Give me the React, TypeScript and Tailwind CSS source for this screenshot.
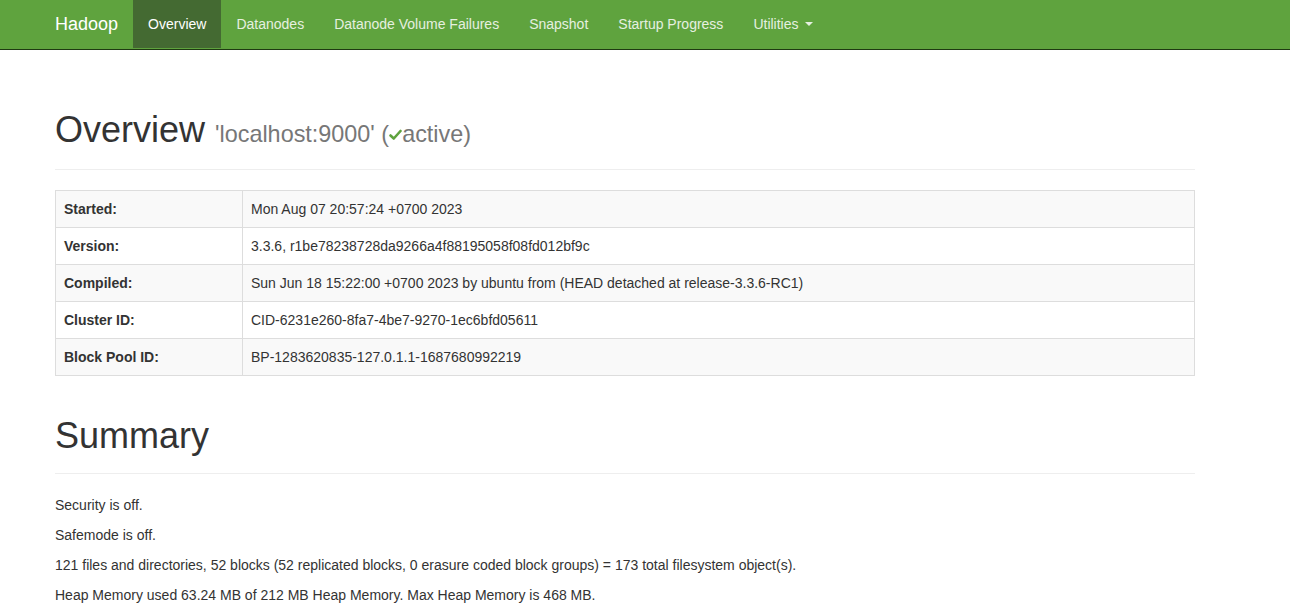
import React from "react";

const navItems = ["Datanodes", "Datanode Volume Failures", "Snapshot", "Startup Progress"];

const rows: [string, string][] = [
  ["Started:", "Mon Aug 07 20:57:24 +0700 2023"],
  ["Version:", "3.3.6, r1be78238728da9266a4f88195058f08fd012bf9c"],
  ["Compiled:", "Sun Jun 18 15:22:00 +0700 2023 by ubuntu from (HEAD detached at release-3.3.6-RC1)"],
  ["Cluster ID:", "CID-6231e260-8fa7-4be7-9270-1ec6bfd05611"],
  ["Block Pool ID:", "BP-1283620835-127.0.1.1-1687680992219"],
];

export default function App() {
  return (
    <div className="min-h-[609px] bg-white text-[14px] leading-[20px] text-[#333]" style={{ fontFamily: '"Liberation Sans", Arial, Helvetica, sans-serif' }}>
      <nav className="h-[50px] bg-[#5fa33e] border-b border-[#1f3a12]">
        <div className="ml-[40px] flex h-[49px] items-stretch pb-[1px]">
          <span className="flex items-center px-[15px] text-[18px] text-white">Hadoop</span>
          <span className="flex items-center px-[15px] bg-[#446a32] text-white">Overview</span>
          {navItems.map((n) => (
            <span key={n} className="flex items-center px-[15px] text-[#e6f0e0]">{n}</span>
          ))}
          <span className="flex items-center px-[15px] text-[#e6f0e0]">
            Utilities
            <span className="ml-[6px] inline-block h-0 w-0 border-x-[4px] border-t-[4px] border-x-transparent border-t-[#e6f0e0]" />
          </span>
        </div>
      </nav>

      <div className="ml-[55px] w-[1140px]">
        <div className="mt-[60px] mb-[20px] border-b border-[#eee] pb-[15px]">
          <h1 className="text-[36px] leading-[40px] text-[#333]" style={{ fontWeight: 400 }}>
            Overview{" "}
            <span className="text-[23.4px] text-[#777]">
              'localhost:9000' (
              <svg className="inline-block mb-[2px]" width="13" height="11" viewBox="0 0 13 11">
                <path d="M1.5 6.5 L4.8 9.5 L11.5 2" stroke="#5fa33e" strokeWidth="2.6" fill="none" strokeLinecap="round" strokeLinejoin="round" />
              </svg>
              active)
            </span>
          </h1>
        </div>

        <table className="w-full border-collapse border border-[#ddd] mb-[20px]">
          <tbody>
            {rows.map(([k, v], i) => (
              <tr key={k} className={i % 2 === 0 ? "bg-[#f9f9f9]" : "bg-white"}>
                <th className="w-[187px] border border-[#ddd] p-[8px] text-left font-bold">{k}</th>
                <td className="border border-[#ddd] p-[8px]">{v}</td>
              </tr>
            ))}
          </tbody>
        </table>

        <div className="mt-[40px] mb-[21px] border-b border-[#eee] pb-[17px]">
          <h1 className="text-[36px] leading-[40px] text-[#333]">Summary</h1>
        </div>

        <p className="mb-[10px]">Security is off.</p>
        <p className="mb-[10px]">Safemode is off.</p>
        <p className="mb-[10px]">121 files and directories, 52 blocks (52 replicated blocks, 0 erasure coded block groups) = 173 total filesystem object(s).</p>
        <p className="mb-[10px]">Heap Memory used 63.24 MB of 212 MB Heap Memory. Max Heap Memory is 468 MB.</p>
      </div>
    </div>
  );
}
